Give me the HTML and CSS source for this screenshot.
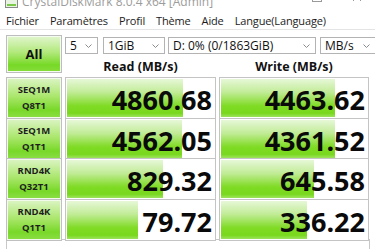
FILE: index.html
```html
<!DOCTYPE html>
<html lang="fr">
<head>
    <meta charset="UTF-8">
    <meta name="viewport" content="width=device-width, initial-scale=1.0">
    <title>CrystalDiskMark 8.0.4 x64 [Admin]</title>
    <link rel="stylesheet" href="styles.css">
</head>
<body>
    <!-- barre de titre (coupée en haut) -->
    <div class="titlebar">
        <svg class="app-icon" viewBox="0 0 13 16">
            <rect x="0.5" y="0.5" width="12" height="12" fill="#e9f3e2" stroke="#8a8a8a"/>
            <rect x="2" y="9" width="9" height="2" fill="#7cc84a"/>
        </svg>
        <span class="title">CrystalDiskMark 8.0.4 x64 [Admin]</span>
        <svg class="win-btns" viewBox="0 0 70 16">
            <rect x="12.5" y="-2.5" width="9" height="9" fill="none" stroke="#9a9a9a"/>
            <path d="M53 -2 L61 6 M61 -2 L53 6" stroke="#9a9a9a" stroke-width="1"/>
        </svg>
    </div>

    <div class="menubar">
        <span>Fichier</span>
        <span>Paramètres</span>
        <span>Profil</span>
        <span>Thème</span>
        <span>Aide</span>
        <span>Langue(Language)</span>
    </div>

    <div class="panel">
        <div class="head">
            <div class="all-btn">All</div>
            <div class="selects">
                <div class="select w-count"><span>5</span><svg viewBox="0 0 7 4"><path d="M0.5 0.5 L3.5 3.5 L6.5 0.5" fill="none" stroke="#8c8c8c"/></svg></div>
                <div class="select w-size"><span>1GiB</span><svg viewBox="0 0 7 4"><path d="M0.5 0.5 L3.5 3.5 L6.5 0.5" fill="none" stroke="#8c8c8c"/></svg></div>
                <div class="select w-drive"><span>D: 0% (0/1863GiB)</span><svg viewBox="0 0 7 4"><path d="M0.5 0.5 L3.5 3.5 L6.5 0.5" fill="none" stroke="#8c8c8c"/></svg></div>
                <div class="select w-unit"><span>MB/s</span><svg viewBox="0 0 7 4"><path d="M0.5 0.5 L3.5 3.5 L6.5 0.5" fill="none" stroke="#8c8c8c"/></svg></div>
            </div>
            <div class="col-title">Read (MB/s)</div>
            <div class="col-title">Write (MB/s)</div>
        </div>

        <div class="row">
            <div class="label"><span>SEQ1M</span><span>Q8T1</span></div>
            <div class="value" style="background-size:117px 100%">4860.68</div>
            <div class="value" style="background-size:115px 100%">4463.62</div>
        </div>
        <div class="row">
            <div class="label"><span>SEQ1M</span><span>Q1T1</span></div>
            <div class="value" style="background-size:116px 100%">4562.05</div>
            <div class="value" style="background-size:115px 100%">4361.52</div>
        </div>
        <div class="row">
            <div class="label"><span>RND4K</span><span>Q32T1</span></div>
            <div class="value" style="background-size:97px 100%">829.32</div>
            <div class="value" style="background-size:94px 100%">645.58</div>
        </div>
        <div class="row">
            <div class="label"><span>RND4K</span><span>Q1T1</span></div>
            <div class="value" style="background-size:72px 100%">79.72</div>
            <div class="value" style="background-size:87px 100%">336.22</div>
        </div>

        <div class="comment"></div>
    </div>
</body>
</html>
```
FILE: styles.css
```css
body {
    margin: 0;
    width: 375px;
    height: 249px;
    overflow: hidden;
    background: #fff;
    font-family: "Open Sans", "Noto Sans", sans-serif;
    color: #111;
}

/* barre de titre */
.titlebar {
    height: 11px;
    display: flex;
    align-items: flex-end;
    overflow: hidden;
}

.titlebar > * {
    flex: none;
}

.app-icon {
    width: 13px;
    height: 16px;
    margin-left: 5px;
}

.title {
    height: 18px;
    line-height: 18px;
    margin-left: 4px;
    font-size: 12px;
    color: #9c9c9c;
}

.win-btns {
    width: 70px;
    height: 16px;
    margin-left: auto;
    margin-right: 5px;
}

/* menu */
.menubar {
    display: flex;
    align-items: center;
    gap: 11px;
    height: 18px;
    padding-left: 6px;
    border-bottom: 1px solid #e4e4e4;
    font-size: 11px;
    letter-spacing: -0.15px;
    color: #1b1b1b;
}

.panel {
    padding: 5px 0 0 6px;
}

.head {
    display: grid;
    grid-template-columns: 56px 151px 150px;
    grid-template-rows: 19px 23px;
    column-gap: 3px;
}

.all-btn {
    grid-row: 1 / 3;
    align-self: start;
    height: 36px;
    border: 1px solid #bdbdbd;
    box-shadow: inset 0 0 0 1px #f4fbef;
    background: linear-gradient(#e2f6cf, #b2e97c 45%, #78d927 80%, #86dc3a);
    display: flex;
    align-items: center;
    justify-content: center;
    font-size: 13px;
    font-weight: 700;
    color: #111;
}

.selects {
    grid-column: 2 / 4;
    display: flex;
    margin-top: 2px;
}

.select {
    flex: none;
    height: 15px;
    border: 1px solid #b3b3b3;
    background: #fff;
    display: flex;
    align-items: center;
    justify-content: space-between;
    padding: 0 5px 0 4px;
    font-size: 12px;
    line-height: 15px;
    color: #111;
}

.select svg {
    width: 7px;
    height: 4px;
}

.w-count { width: 22px; }
.w-size { width: 51px; margin-left: 5px; }
.w-drive { width: 137px; margin-left: 3px; }
.w-unit { width: 45px; margin-left: 4px; }

.col-title {
    align-self: end;
    margin-bottom: 2px;
    line-height: 16px;
    text-align: center;
    font-size: 12.5px;
    font-weight: 700;
    color: #111;
}

/* lignes de résultats */
.row {
    display: grid;
    grid-template-columns: 56px 151px 150px;
    column-gap: 3px;
    height: 37px;
    margin-bottom: 3.5px;
}

.label {
    border: 1px solid #c0c0c0;
    box-shadow: inset 0 0 0 1px #f2faec;
    background: linear-gradient(#dcf4c5, #ace76f 45%, #78d828 80%, #8cde46);
    display: flex;
    flex-direction: column;
    justify-content: center;
    align-items: center;
    font-size: 9.5px;
    font-weight: 700;
    line-height: 16px;
    color: #1e1e1e;
}

.value {
    border: 1px solid #c4c4c4;
    box-shadow: inset 0 0 0 1px #fff;
    background-color: #fff;
    background-image: linear-gradient(#e9f8dc 0%, #c2ec98 35%, #7fdb24 70%, #79d81d 88%, #a6e56f 100%);
    background-repeat: no-repeat;
    background-origin: padding-box;
    display: flex;
    align-items: center;
    justify-content: flex-end;
    padding: 3px 3px 0 0;
    font-size: 27px;
    font-weight: 700;
    color: #0a0a0a;
}

.comment {
    width: 362px;
    height: 20px;
    border: 1px solid #c8c8c8;
    margin-top: -0.5px;
}
```
